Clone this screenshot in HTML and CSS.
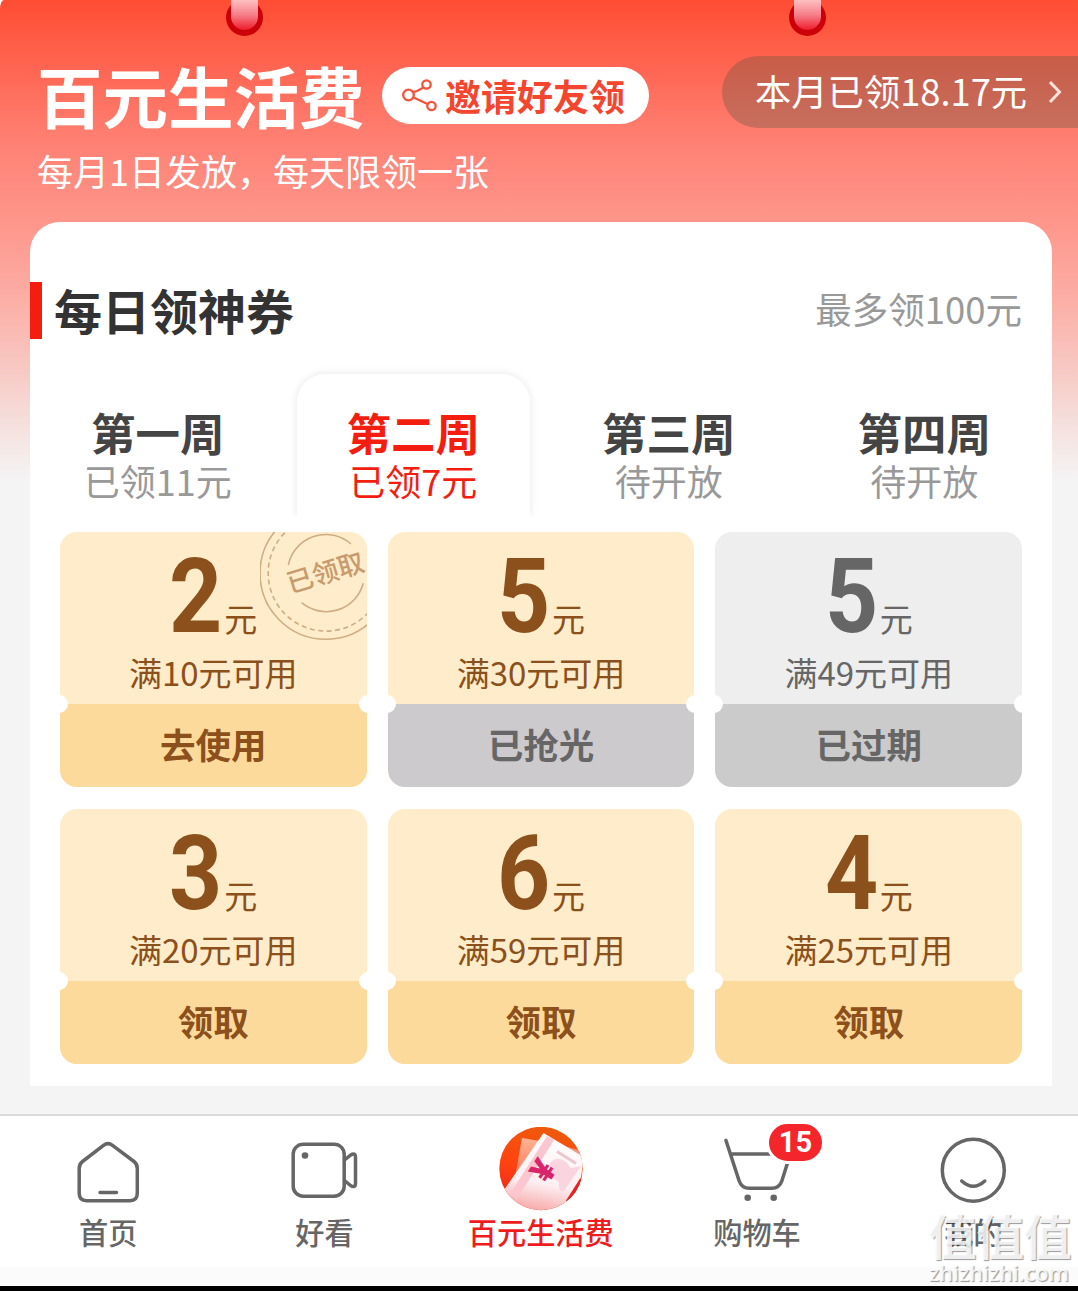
FILE: index.html
```html
<!DOCTYPE html>
<html lang="zh-CN">
<head>
    <meta charset="UTF-8">
    <meta name="viewport" content="width=device-width, initial-scale=1.0">
    <title>百元生活费</title>
    <link rel="stylesheet" href="styles.css">
</head>
<body>
    <div class="page">
        <div class="pin pin-left"></div>
        <div class="pin pin-right"></div>

        <div class="header">
            <div class="header-row">
                <h1>百元生活费</h1>
                <a class="invite" href="#">
                    <svg width="36" height="34" viewBox="0 0 36 34" fill="none" stroke="#f4523b" stroke-width="2.3">
                        <circle cx="6.5" cy="16" r="5.3"/>
                        <circle cx="24.5" cy="5.5" r="4.2"/>
                        <circle cx="29.5" cy="27" r="4.2"/>
                        <path d="M11 13.2 L15 12 L21.5 8.5 M11.5 18.5 L25.5 25"/>
                    </svg>
                    <span>邀请好友领</span>
                </a>
                <a class="month" href="#">
                    <span>本月已领18.17元</span>
                    <svg width="14" height="24" viewBox="0 0 14 24" fill="none" stroke="#ffe3dd" stroke-width="3">
                        <path d="M2 2 L11.5 12 L2 22"/>
                    </svg>
                </a>
            </div>
            <p class="subtitle">每月1日发放，每天限领一张</p>
        </div>

        <div class="card">
            <div class="card-head">
                <h2>每日领神券</h2>
                <span class="limit">最多领100元</span>
            </div>

            <div class="tabs">
                <div class="tab"><b>第一周</b><span>已领11元</span></div>
                <div class="tab active"><div class="tab-bg"></div><b>第二周</b><span>已领7元</span></div>
                <div class="tab"><b>第三周</b><span>待开放</span></div>
                <div class="tab"><b>第四周</b><span>待开放</span></div>
            </div>

            <div class="coupons">
                <div class="coupon">
                    <div class="coupon-top">
                        <div class="amount"><strong>2</strong><span>元</span></div>
                        <div class="rule">满10元可用</div>
                    </div>
                    <div class="coupon-btn">去使用</div>
                    <svg class="stamp" width="107" height="112" viewBox="0 0 107 112" fill="none" stroke="#cfac83" stroke-width="1.6">
                        <circle cx="66" cy="41.3" r="66"/>
                        <circle cx="66" cy="41.3" r="57.8" stroke-dasharray="5 3.5"/>
                        <path d="M28.3 33 A38.3 38.3 0 0 1 91 12 M41.7 70.7 A38.3 38.3 0 0 0 103.3 51.3"/>
                        <text class="stamp-text" x="65.5" y="50" text-anchor="middle" transform="rotate(-17 66 41)">已领取</text>
                    </svg>
                </div>
                <div class="coupon sold-out">
                    <div class="coupon-top">
                        <div class="amount"><strong>5</strong><span>元</span></div>
                        <div class="rule">满30元可用</div>
                    </div>
                    <div class="coupon-btn">已抢光</div>
                </div>
                <div class="coupon expired">
                    <div class="coupon-top">
                        <div class="amount"><strong>5</strong><span>元</span></div>
                        <div class="rule">满49元可用</div>
                    </div>
                    <div class="coupon-btn">已过期</div>
                </div>
                <div class="coupon">
                    <div class="coupon-top">
                        <div class="amount"><strong>3</strong><span>元</span></div>
                        <div class="rule">满20元可用</div>
                    </div>
                    <div class="coupon-btn">领取</div>
                </div>
                <div class="coupon">
                    <div class="coupon-top">
                        <div class="amount"><strong>6</strong><span>元</span></div>
                        <div class="rule">满59元可用</div>
                    </div>
                    <div class="coupon-btn">领取</div>
                </div>
                <div class="coupon">
                    <div class="coupon-top">
                        <div class="amount"><strong>4</strong><span>元</span></div>
                        <div class="rule">满25元可用</div>
                    </div>
                    <div class="coupon-btn">领取</div>
                </div>
            </div>
        </div>

        <div class="navbar">
            <a href="#">
                <svg class="icon" viewBox="0 0 86 84">
                    <path d="M38.5 18.3 Q43 15 47.5 18.3 L69 34.5 Q72.3 37 72.3 41.5 V66 Q72.3 73.7 65 73.7 H21.5 Q14.2 73.7 14.2 66 V41.5 Q14.2 37 17.5 34.5 Z M35 65.5 H51.5"/>
                </svg>
                <span>首页</span>
            </a>
            <a href="#">
                <svg class="icon" viewBox="0 0 86 84">
                    <rect x="12.2" y="17.2" width="51" height="52" rx="10"/>
                    <path d="M63.5 33 L69.500 28.200 Q74.500 25 74.500 30.500 V56 Q74.500 61.500 69.500 58.500 L63.500 53.500"/>
                    <circle class="dot" cx="24" cy="28.5" r="3.3"/>
                </svg>
                <span>好看</span>
            </a>
            <a class="current" href="#">
                <svg width="86" height="84" viewBox="0 0 86 84">
                    <defs>
                        <clipPath id="coin"><circle cx="43" cy="41.5" r="41.7"/></clipPath>
                        <linearGradient id="coinBg" x1="0.6" y1="0" x2="0.4" y2="1">
                            <stop offset="0" stop-color="#ee5a0c"/>
                            <stop offset="0.5" stop-color="#ff4310"/>
                            <stop offset="1" stop-color="#e8201c"/>
                        </linearGradient>
                        <linearGradient id="bill" x1="0.6" y1="0" x2="0.4" y2="1">
                            <stop offset="0" stop-color="#fff"/>
                            <stop offset="0.65" stop-color="#fdeef1"/>
                            <stop offset="1" stop-color="#f7a9a8"/>
                        </linearGradient>
                        <linearGradient id="backBill" x1="0" y1="0" x2="0" y2="1">
                            <stop offset="0" stop-color="#ffb594"/>
                            <stop offset="1" stop-color="#ff7555"/>
                        </linearGradient>
                    </defs>
                    <g clip-path="url(#coin)">
                        <rect width="86" height="84" fill="url(#coinBg)"/>
                        <path d="M24 11 L42 14 L17 50 Z" fill="url(#backBill)"/>
                        <path d="M62 18 L84 24 L86 36 Z" fill="#f7937c"/>
                        <path d="M45.5 6 L86 30 L83 50 L66 84 H20 L6 63 Z" fill="url(#bill)"/>
                        <path d="M49 9 L56 13 L19 72 L12 67 Z" fill="#fbc6cf"/>
                        <path d="M52 36 Q59 28 68 35 L73 41 L83 39 L66 64 Q60 66 61 55 Q51 50 52 36" fill="#fad5df"/>
                        <path d="M59 24.5 L78 36.5" stroke="#edc5cf" stroke-width="3"/>
                        <path d="M70 75 L84 53" stroke="#e62320" stroke-width="5"/>
                        <text class="yen" x="45" y="55.5" text-anchor="middle" transform="rotate(-57 45 43.5)">¥</text>
                    </g>
                </svg>
                <span>百元生活费</span>
            </a>
            <a href="#">
                <svg class="icon" viewBox="0 0 86 84">
                    <path d="M12 13.5 L25 53.5 Q27.5 61.3 35.5 61.3 H57.5 Q65.5 61.3 68 53.5 L73.5 36 M17.5 27 H60"/>
                    <circle class="dot" cx="33.7" cy="70.7" r="3.3"/>
                    <circle class="dot" cx="59.7" cy="70.7" r="3.3"/>
                </svg>
                <em class="badge">15</em>
                <span>购物车</span>
            </a>
            <a href="#">
                <svg class="icon" viewBox="0 0 86 84">
                    <circle cx="43.3" cy="43.2" r="31"/>
                    <path d="M31.7 54 Q43.3 64.500 54.800 54"/>
                </svg>
                <span>我的</span>
            </a>
        </div>
        <div class="safe-area"></div>

        <div class="watermark">
            <b>值值值</b>
            <i>zhizhizhi.com</i>
        </div>
    </div>
</body>
</html>
```
FILE: styles.css
```css
* {
    box-sizing: border-box;
}
body {
    margin: 0;
    background-color: #f4f4f4;
    font-family: "Noto Sans CJK SC", sans-serif;
}
h1, h2, p {
    margin: 0;
}
a {
    color: inherit;
    text-decoration: none;
}
svg {
    display: block;
    flex: none;
}
.page {
    position: relative;
    width: 1078px;
    height: 1291px;
    overflow: hidden;
    border-bottom: 5px solid #000;
    background: linear-gradient(#ff4d33 0, #ff6450 64px, #ff8073 140px, #fe968b 222px, #fcaba2 290px, #f8c5bf 360px, #f5dedb 420px, #f4f4f4 480px);
    border-top-left-radius: 4px 9px;
}

/* hanging pins at the top edge */
.pin {
    position: absolute;
    top: -1px;
    width: 37px;
    height: 37px;
    border-radius: 50%;
    background-color: #cc0008;
}
.pin::after {
    content: "";
    position: absolute;
    left: 5px;
    top: 0;
    width: 27px;
    height: 31px;
    border-radius: 0 0 14px 14px;
    background: linear-gradient(#fdc3c3, #f7818b 50%, #ee1c2b);
}
.pin-left {
    left: 226px;
}
.pin-right {
    left: 789px;
}

.header {
    height: 222px;
    padding: 56px 0 0 37px;
    color: white;
}
.header-row {
    display: flex;
    align-items: flex-start;
    height: 78px;
}
h1 {
    width: 345px;
    font-size: 65.5px;
    line-height: 78px;
    font-weight: 700;
    white-space: nowrap;
}
.invite {
    display: flex;
    align-items: center;
    gap: 7px;
    width: 267px;
    height: 57px;
    margin-top: 11px;
    padding-left: 20px;
    border-radius: 29px;
    background-color: white;
    color: #f4452f;
    font-size: 36px;
    font-weight: 700;
    line-height: 57px;
    white-space: nowrap;
}
.month {
    display: flex;
    align-items: center;
    gap: 21px;
    width: 356px;
    height: 72px;
    margin-left: auto;
    padding-left: 33px;
    border-radius: 36px 0 0 36px;
    background-color: rgba(95, 85, 65, 0.34);
    font-size: 36.3px;
    white-space: nowrap;
}
.month span {
    height: 72px;
    line-height: 68px;
}
.subtitle {
    margin-top: 12px;
    font-size: 36px;
    line-height: 48px;
}

.card {
    width: 1022px;
    height: 864px;
    margin-left: 30px;
    padding-top: 60px;
    border-radius: 30px 30px 0 0;
    background-color: white;
}
.card-head {
    display: flex;
    justify-content: space-between;
    height: 57px;
    padding-right: 30px;
    border-left: 12px solid #f31e0f;
}
h2 {
    padding-left: 12px;
    color: #333;
    font-size: 48px;
    line-height: 54px;
}
.limit {
    color: #999;
    font-size: 36.5px;
    line-height: 53px;
}

.tabs {
    display: grid;
    grid-template-columns: repeat(4, 1fr);
    height: 193px;
    padding-top: 69px;
}
.tab {
    position: relative;
    display: flex;
    flex-direction: column;
    align-items: center;
    color: #999;
}
.tab b {
    position: relative;
    color: #444;
    font-size: 44.5px;
    line-height: 48px;
}
.tab span {
    position: relative;
    font-size: 36px;
    line-height: 49px;
}
.tab.active, .tab.active b {
    color: #f31e0f;
}
/* raised sheet behind the selected week, cut off flat at the bottom */
.tab-bg {
    position: absolute;
    left: 11px;
    top: -34px;
    width: 233px;
    height: 142px;
    border-radius: 28px 28px 0 0;
    box-shadow: 0 0 9px rgba(0, 0, 0, 0.1);
    clip-path: inset(-12px -12px 0 -12px);
}

.coupons {
    display: grid;
    grid-template-columns: repeat(3, 306.6px);
    justify-content: space-between;
    row-gap: 21.5px;
    padding: 0 30px;
}
.coupon {
    position: relative;
    height: 255px;
    overflow: hidden;
    border-radius: 17px;
    background-color: #feecca;
    color: #8b501c;
    text-align: center;
}
.coupon-top {
    height: 172px;
    padding-top: 15px;
}
.amount {
    display: flex;
    justify-content: center;
    align-items: baseline;
    gap: 4px;
    height: 100px;
    padding-left: 2px;
}
.amount strong {
    display: flex;
    justify-content: center;
    width: 49px;
    font-family: Roboto, sans-serif;
    font-size: 103px;
    font-weight: 700;
    line-height: 100px;
    transform: scaleX(0.9);
}
.amount span {
    font-size: 33px;
    line-height: 40px;
}
.rule {
    margin-top: 5px;
    font-size: 33px;
    line-height: 40px;
}
.coupon-btn {
    position: relative;
    height: 83px;
    background-color: #fcda9b;
    font-size: 35.5px;
    font-weight: 700;
    line-height: 80px;
}
.coupon-btn::before, .coupon-btn::after {
    content: "";
    position: absolute;
    top: -9px;
    width: 18px;
    height: 18px;
    border-radius: 50%;
    background-color: white;
}
.coupon-btn::before {
    left: -10px;
}
.coupon-btn::after {
    right: -10px;
}
.sold-out .coupon-btn {
    background-color: #cdcacd;
    color: #666;
}
.expired {
    background-color: #eee;
    color: #666;
}
.expired .coupon-btn {
    background-color: #cbcbcb;
}
.stamp {
    position: absolute;
    right: 0;
    top: 0;
}
.stamp-text {
    fill: #c79b6e;
    stroke: none;
    font-size: 26.5px;
    font-weight: 500;
}

.navbar {
    display: grid;
    grid-template-columns: repeat(5, 216.3px);
    height: 153px;
    margin-top: 28px;
    border-top: 2px solid #dadada;
    background-color: white;
    color: #666;
}
.navbar a {
    position: relative;
    display: flex;
    flex-direction: column;
    align-items: center;
    padding-top: 11px;
    font-size: 29.2px;
    font-weight: 500;
    line-height: 41px;
}
.navbar .current {
    color: #ee1c1c;
}
.icon {
    width: 86px;
    height: 84px;
    fill: none;
    stroke: #666;
    stroke-width: 3.5;
    stroke-linecap: round;
    stroke-linejoin: round;
}
.dot {
    fill: #666;
    stroke: none;
}
.yen {
    fill: #d9256b;
    font-family: Roboto, sans-serif;
    font-size: 34px;
    font-weight: 900;
}
.badge {
    position: absolute;
    left: 117px;
    top: 5px;
    width: 59px;
    height: 43px;
    border: 3px solid white;
    border-radius: 22px;
    background-color: #f4262c;
    color: white;
    font-family: Roboto, sans-serif;
    font-size: 29px;
    font-style: normal;
    font-weight: 700;
    line-height: 37px;
    text-align: center;
}
.safe-area {
    height: 19px;
    background-color: #fbfbfb;
}
.watermark {
    position: absolute;
    right: 6px;
    bottom: 0;
    width: 143px;
    color: rgba(255, 255, 255, 0.85);
    text-shadow: 1px 1px 1px rgba(0, 0, 0, 0.4);
    white-space: nowrap;
}
.watermark b {
    display: block;
    font-size: 47.5px;
    line-height: 48px;
}
.watermark i {
    display: block;
    font-family: "Open Sans", sans-serif;
    font-size: 21.5px;
    font-style: normal;
    font-weight: 600;
    line-height: 27px;
}
```
